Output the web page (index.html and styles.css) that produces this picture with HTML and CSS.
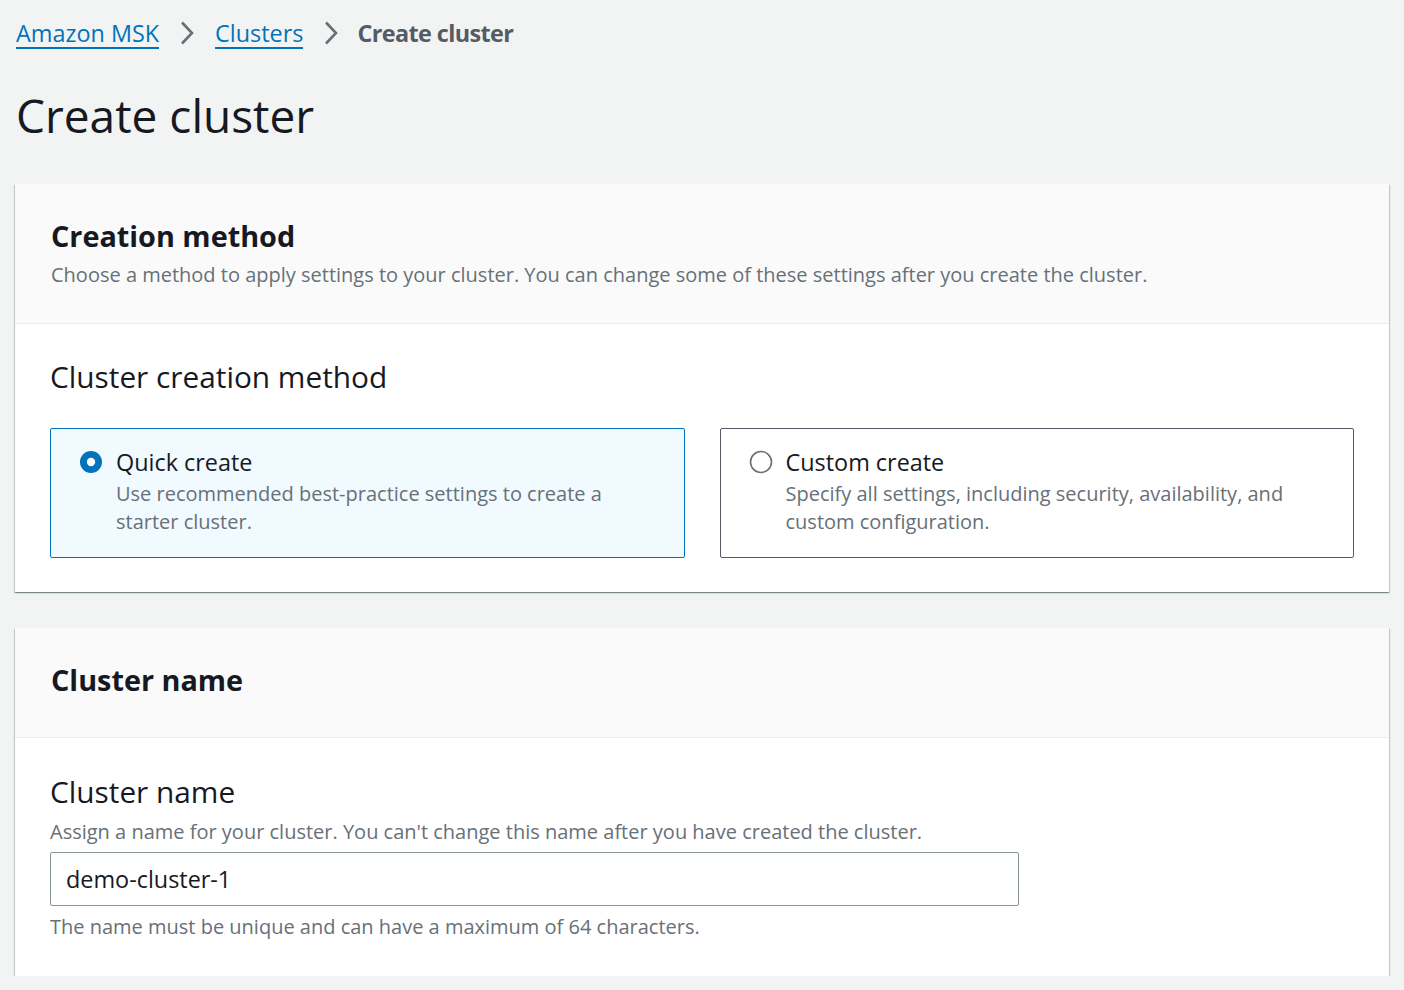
FILE: index.html
```html
<!DOCTYPE html>
<html lang="en">
<head>
<meta charset="utf-8">
<title>Create cluster</title>
<link rel="stylesheet" href="styles.css">
</head>
<body>
<div class="page">
  <nav class="breadcrumbs">
    <a class="crumb-link" href="#">Amazon MSK</a>
    <svg class="chev" width="14" height="24" viewBox="0 0 14 24"><path d="M2 1.5 L12 12 L2 22.5" fill="none" stroke="#687078" stroke-width="2.6"/></svg>
    <a class="crumb-link" href="#">Clusters</a>
    <svg class="chev" width="14" height="24" viewBox="0 0 14 24"><path d="M2 1.5 L12 12 L2 22.5" fill="none" stroke="#687078" stroke-width="2.6"/></svg>
    <span class="crumb-current">Create cluster</span>
  </nav>

  <h1 class="page-title">Create cluster</h1>

  <section class="card">
    <div class="card-header">
      <h2 class="card-title">Creation method</h2>
      <p class="card-desc">Choose a method to apply settings to your cluster. You can change some of these settings after you create the cluster.</p>
    </div>
    <div class="card-body">
      <div class="field-label">Cluster creation method</div>
      <div class="tiles">
        <div class="tile tile-selected">
          <svg class="radio" width="24" height="24" viewBox="0 0 24 24"><circle cx="12" cy="12" r="11" fill="#0073bb"/><circle cx="12" cy="12" r="4.2" fill="#ffffff"/></svg>
          <div class="tile-text">
            <div class="tile-label">Quick create</div>
            <div class="tile-desc">Use recommended best-practice settings to create a starter cluster.</div>
          </div>
        </div>
        <div class="tile">
          <svg class="radio" width="24" height="24" viewBox="0 0 24 24"><circle cx="12" cy="12" r="10.5" fill="#ffffff" stroke="#687078" stroke-width="1.6"/></svg>
          <div class="tile-text">
            <div class="tile-label">Custom create</div>
            <div class="tile-desc">Specify all settings, including security, availability, and custom configuration.</div>
          </div>
        </div>
      </div>
    </div>
  </section>

  <section class="card">
    <div class="card-header card-header-short">
      <h2 class="card-title">Cluster name</h2>
    </div>
    <div class="card-body card-body-form">
      <div class="field-label">Cluster name</div>
      <p class="field-desc">Assign a name for your cluster. You can't change this name after you have created the cluster.</p>
      <div class="text-input">demo-cluster-1</div>
      <p class="field-constraint">The name must be unique and can have a maximum of 64 characters.</p>
    </div>
  </section>
</div>
</body>
</html>
```

FILE: styles.css
```css
html, body {
  margin: 0;
  padding: 0;
  background: #f2f3f3;
}
body {
  font-family: "Open Sans", "Noto Sans", sans-serif;
  color: #16191f;
}
.page {
  padding: 0 15px;
}
.breadcrumbs {
  display: flex;
  align-items: center;
  gap: 21px;
  height: 32px;
  padding-top: 17px;
  padding-left: 1px;
  font-size: 23.4px;
}
.crumb-link {
  display: inline-block;
  line-height: 28px;
  color: #0073bb;
  text-decoration: none;
  border-bottom: 2px solid #0073bb;
  margin-top: 2px;
}
.chev {
  display: block;
}
.crumb-current {
  line-height: 28px;
  color: #545b64;
  font-weight: 700;
  letter-spacing: -0.6px;
  margin-left: -2px;
}
.page-title {
  margin: 38px 0 0 1px;
  font-size: 46px;
  font-weight: 400;
  line-height: 56px;
  color: #16191f;
}
.card {
  margin-top: 41px;
  background: #ffffff;
  box-shadow: 0 1px 1px 0 rgba(0, 28, 36, 0.3), 1px 1px 1px 0 rgba(0, 28, 36, 0.15), -1px 1px 1px 0 rgba(0, 28, 36, 0.15);
}
.card + .card {
  margin-top: 36px;
}
.card-header {
  background: #fafafa;
  border-bottom: 1px solid #eaeded;
  padding: 34px 35px 34px 36px;
}
.card-header-short {
  padding-bottom: 39px;
}
.card-title {
  margin: 0;
  font-size: 28.8px;
  line-height: 36px;
  font-weight: 700;
  color: #16191f;
}
.card-desc {
  margin: 7px 0 0;
  font-size: 20px;
  line-height: 28px;
  color: #687078;
}
.card-body {
  padding: 35px 35px 34px;
}
.card-body-form {
  padding-top: 36px;
  padding-bottom: 35px;
}
.field-label {
  font-size: 29.8px;
  line-height: 36px;
  color: #16191f;
}
.tiles {
  display: grid;
  grid-template-columns: 1fr 1fr;
  gap: 35px;
  margin-top: 33px;
}
.tile {
  display: flex;
  align-items: flex-start;
  gap: 13px;
  border: 1px solid #545b64;
  border-radius: 2px;
  padding: 19px 29px 21px 28px;
  background: #ffffff;
}
.tile-selected {
  border-color: #0073bb;
  background: #f1faff;
}
.radio {
  flex: none;
  margin-top: 2px;
}
.tile-label {
  font-size: 23.4px;
  line-height: 28px;
  color: #16191f;
}
.tile-desc {
  margin-top: 4px;
  font-size: 20px;
  line-height: 28px;
  color: #687078;
}
.field-desc {
  margin: 8px 0 0;
  font-size: 20px;
  line-height: 28px;
  color: #687078;
}
.text-input {
  box-sizing: border-box;
  width: 969px;
  height: 54px;
  margin-top: 6px;
  border: 1px solid #879596;
  border-radius: 2px;
  padding: 0 15px;
  display: flex;
  align-items: center;
  font-size: 23.4px;
  color: #16191f;
  background: #ffffff;
}
.field-constraint {
  margin: 7px 0 0;
  font-size: 20px;
  line-height: 28px;
  color: #687078;
}
```
